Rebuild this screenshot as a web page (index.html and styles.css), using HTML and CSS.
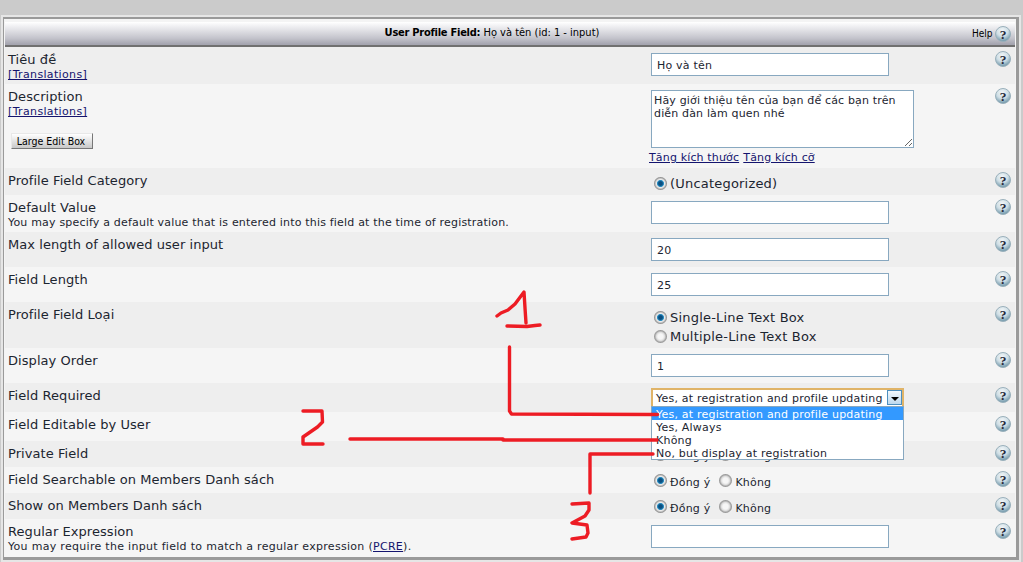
FILE: index.html
```html
<!DOCTYPE html>
<html lang="vi">
<head>
<meta charset="utf-8">
<title>User Profile Field</title>
<link rel="stylesheet" href="styles.css">
</head>
<body>
<svg width="0" height="0" class="defs">
  <defs>
    <radialGradient id="hg" cx="45%" cy="28%" r="76%">
      <stop offset="0" stop-color="#f2f6f8"/>
      <stop offset="0.5" stop-color="#cfdee5"/>
      <stop offset="1" stop-color="#5f8ba0"/>
    </radialGradient>
    <symbol id="help" viewBox="0 0 16 16">
      <circle cx="8" cy="8" r="7.500" fill="url(#hg)" stroke="#9ab0bb" stroke-width="1"/>
      <text x="8" y="12.500" text-anchor="middle" font-family="Liberation Serif, serif" font-weight="bold" font-size="13.500" fill="#262b3c">?</text>
    </symbol>
  </defs>
</svg>
<main class="frame">
  <div class="inner">
    <header class="head">
      <div class="head-title"><b class="head-b">User Profile Field:</b> Họ và tên (id: 1 - input)</div>
      <div class="head-help">Help <svg class="hicon"><use href="#help"/></svg></div>
    </header>

    <section class="row alt r1">
      <div class="label">Tiêu đề<a class="small tr" href="#">[Translations]</a></div>
      <div class="ctl"><input class="text" type="text" value="Họ và tên"></div>
      <div class="hc"><svg class="hicon"><use href="#help"/></svg></div>
    </section>

    <section class="row r2">
      <div class="label">Description<a class="small tr" href="#">[Translations]</a>
        <div class="btnwrap"><button class="btn" type="button">Large Edit Box</button></div>
      </div>
      <div class="ctl">
        <textarea class="area">Hãy giới thiệu tên của bạn để các bạn trên diễn đàn làm quen nhé</textarea>
        <div class="sizers"><a class="small" href="#">Tăng kích thước</a> <a class="small" href="#">Tăng kích cỡ</a></div>
      </div>
      <div class="hc"><svg class="hicon"><use href="#help"/></svg></div>
    </section>

    <section class="row alt r3">
      <div class="label">Profile Field Category</div>
      <div class="ctl ctl-radio"><div class="opt"><span class="radio on"></span>(Uncategorized)</div></div>
      <div class="hc"><svg class="hicon"><use href="#help"/></svg></div>
    </section>

    <section class="row r4">
      <div class="label">Default Value<div class="desc">You may specify a default value that is entered into this field at the time of registration.</div></div>
      <div class="ctl"><input class="text" type="text" value=""></div>
      <div class="hc"><svg class="hicon"><use href="#help"/></svg></div>
    </section>

    <section class="row alt r5">
      <div class="label">Max length of allowed user input</div>
      <div class="ctl"><input class="text" type="text" value="20"></div>
      <div class="hc"><svg class="hicon"><use href="#help"/></svg></div>
    </section>

    <section class="row r6">
      <div class="label">Field Length</div>
      <div class="ctl"><input class="text" type="text" value="25"></div>
      <div class="hc"><svg class="hicon"><use href="#help"/></svg></div>
    </section>

    <section class="row alt r7">
      <div class="label">Profile Field Loại</div>
      <div class="ctl ctl-radio">
        <div class="opt"><span class="radio on"></span>Single-Line Text Box</div>
        <div class="opt"><span class="radio"></span>Multiple-Line Text Box</div>
      </div>
      <div class="hc"><svg class="hicon"><use href="#help"/></svg></div>
    </section>

    <section class="row r8">
      <div class="label">Display Order</div>
      <div class="ctl"><input class="text" type="text" value="1"></div>
      <div class="hc"><svg class="hicon"><use href="#help"/></svg></div>
    </section>

    <section class="row alt r9">
      <div class="label">Field Required</div>
      <div class="ctl">
        <div class="select">
          <span class="select-val">Yes, at registration and profile updating</span>
          <span class="select-btn"><span class="arrow"></span></span>
          <ul class="menu">
            <li class="sel">Yes, at registration and profile updating</li>
            <li>Yes, Always</li>
            <li>Không</li>
            <li>No, but display at registration</li>
          </ul>
        </div>
      </div>
      <div class="hc"><svg class="hicon"><use href="#help"/></svg></div>
    </section>

    <section class="row r10">
      <div class="label">Field Editable by User</div>
      <div class="ctl"></div>
      <div class="hc"><svg class="hicon"><use href="#help"/></svg></div>
    </section>

    <section class="row alt r11">
      <div class="label">Private Field</div>
      <div class="ctl ctl-yn"><span class="radio on"></span><span class="yn">Đồng ý</span><span class="radio"></span><span class="yn">Không</span></div>
      <div class="hc"><svg class="hicon"><use href="#help"/></svg></div>
    </section>

    <section class="row r12">
      <div class="label">Field Searchable on Members Danh sách</div>
      <div class="ctl ctl-yn"><span class="radio on"></span><span class="yn">Đồng ý</span><span class="radio"></span><span class="yn">Không</span></div>
      <div class="hc"><svg class="hicon"><use href="#help"/></svg></div>
    </section>

    <section class="row alt r13">
      <div class="label">Show on Members Danh sách</div>
      <div class="ctl ctl-yn"><span class="radio on"></span><span class="yn">Đồng ý</span><span class="radio"></span><span class="yn">Không</span></div>
      <div class="hc"><svg class="hicon"><use href="#help"/></svg></div>
    </section>

    <section class="row r14">
      <div class="label">Regular Expression<div class="desc desc-wide">You may require the input field to match a regular expression (<a href="#">PCRE</a>).</div></div>
      <div class="ctl"><input class="text" type="text" value=""></div>
      <div class="hc"><svg class="hicon"><use href="#help"/></svg></div>
    </section>
  </div>
</main>
<svg class="ink" width="1023" height="562" viewBox="0 0 1023 562" fill="none" stroke="#ed1c24" stroke-width="3.4" stroke-linecap="round" stroke-linejoin="round">
  <path d="M497 316l4-3 7-3 7-6 9-12 1 16 1 15"/>
  <path d="M507 326l20 .5 8-1 5-.5"/>
  <path d="M509.500 347v64l2 3 146 .5"/>
  <path d="M303 411h19l.5 11-5 5-14.500 10v7h20"/>
  <path d="M350 439h153"/>
  <path d="M503 440h154"/>
  <path d="M653 454h-63v39"/>
  <path d="M572 504l17-1v7l-4 6-13 7 15 2 1 8-2 4-14 2"/>
</svg>
</body>
</html>
```
FILE: styles.css
```css
* { box-sizing: border-box; }
html, body { margin: 0; padding: 0; }
body {
  width: 1023px;
  height: 562px;
  overflow: hidden;
  background: #cbcbcb;
  padding: 15px 2px 0 1px;
  font-family: "DejaVu Sans", Verdana, sans-serif;
  font-size: 13px;
  color: #1c2530;
}
.defs { position: absolute; }
.frame {
  border: 2px solid #e6e6e6;
  background: #e6e6e6;
  height: 547px;
}
.inner {
  border: 2px solid #9a9a9a;
  border-width: 2px 3px 3px 1px;
  background: #f4f4f4;
  padding: 3px 1px 0 1px;
  height: 100%;
}
.head {
  height: 25px;
  display: flex;
  align-items: center;
  background: linear-gradient(#ffffff 0%, #e6e6ea 30%, #c4c4cc 70%, #a5a5b0 96%);
  border-bottom: 2px solid #707070;
  font-family: "DejaVu Sans Condensed", "Liberation Sans", sans-serif;
  font-size: 11px;
  color: #000;
}
.head-title { flex: 1; text-align: center; padding: 0 0 2px 7px; }
.head-b { letter-spacing: -.25px; }
.head-help { width: 39px; flex: none; display: flex; align-items: center; gap: 2px; font-size: 10px; margin-right: 4px; }
.hicon { width: 16px; height: 16px; display: block; }
.row {
  display: grid;
  grid-template-columns: 646px 344px 1fr;
  background: #f5f5f5;
}
.alt { background: #eeeeee; }
.r1 { height: 37px; }
.r2 { height: 84px; }
.r3 { height: 27px; }
.r4 { height: 37px; }
.r5 { height: 35px; }
.r6 { height: 35px; }
.r7 { height: 46px; }
.r8 { height: 35px; }
.r9 { height: 29px; }
.r10 { height: 29px; }
.r11 { height: 26px; }
.r12 { height: 26px; }
.r13 { height: 26px; }
.r14 { height: 38px; }
.label { padding: 5px 0 0 3px; line-height: 16px; letter-spacing: .06px; }
.small { font-size: 11px; line-height: 13px; letter-spacing: .15px; }
.tr { display: block; letter-spacing: .35px; }
a { color: #14146e; }
.desc { font-size: 11px; line-height: 13px; letter-spacing: .19px; }
.desc-wide { letter-spacing: .3px; }
.btnwrap { padding-top: 15px; padding-left: 3px; }
.btn {
  display: block;
  width: 82px;
  height: 16px;
  padding: 0 2px 0 0;
  border: 1px solid;
  border-color: #e8e8e8 #777 #777 #e8e8e8;
  background: linear-gradient(#ffffff, #c8c8c8);
  font-family: "DejaVu Sans Condensed", "Liberation Sans", sans-serif;
  font-size: 10.500px;
  color: #000;
}
.ctl { padding-top: 6px; position: relative; }
.text {
  display: block;
  width: 238px;
  height: 23px;
  border: 1px solid #88a8c0;
  background: #fff;
  padding: 2px 5px 0;
  font-family: "DejaVu Sans", sans-serif;
  font-size: 11px;
  letter-spacing: .2px;
  color: #1c2530;
  outline: none;
}
.area {
  display: block;
  width: 263px;
  height: 58px;
  border: 1px solid #88a8c0;
  background: #fff;
  padding: 3px 2px 2px;
  font-family: "DejaVu Sans", sans-serif;
  font-size: 11px;
  line-height: 13px;
  letter-spacing: .16px;
  color: #1c2530;
  outline: none;
  margin: 0;
}
.sizers { margin-left: -2px; line-height: 13px; padding-top: 2px; }
.ctl-radio { padding-top: 6px; padding-left: 3px; letter-spacing: .2px; }
.opt { display: flex; align-items: center; height: 19px; white-space: nowrap; }
.radio {
  flex: none;
  width: 13px;
  height: 13px;
  border-radius: 50%;
  margin-right: 3px;
  background: radial-gradient(circle closest-side at 50% 50%, #f6f6f6 0 40%, #dddddd 65%, #b0b0b0 82%, #8a8a8a 100%);
  display: inline-block;
}
.radio.on { background: radial-gradient(circle closest-side at 50% 50%, #0b4f80 0 28%, #2a8fc4 48%, #f0f0f0 60%, #d8d8d8 72%, #a8a8a8 86%, #7c7c7c 100%); }
.ctl-yn { display: flex; align-items: center; padding: 4px 0 0 3px; font-size: 11px; letter-spacing: .2px; height: 22px; }
.yn { margin-right: 9px; padding-top: 5px; }
.select {
  width: 253px;
  height: 18px;
  margin-top: -1px;
  border: 2px solid #e0b468;
  border-bottom: 0;
  background: #fff;
  display: flex;
  align-items: center;
  position: relative;
  font-size: 11px;
  letter-spacing: .22px;
  padding: 0 0 0 3px;
  justify-content: space-between;
  white-space: nowrap;
}
.select-btn {
  align-self: flex-start;
  width: 15px;
  height: 15px;
  border: 1px solid #4d8fbf;
  background: linear-gradient(#f2f8fd, #bcd8ee);
  display: flex;
  align-items: center;
  justify-content: center;
}
.arrow { width: 0; height: 0; margin-top: 3px; border: 4px solid transparent; border-top: 4px solid #000; border-bottom: 0; }
.menu {
  position: absolute;
  left: -2px;
  top: 16px;
  width: 253px;
  margin: 0;
  padding: 0;
  list-style: none;
  background: #fff;
  border: 1px solid #88a8c0;
  z-index: 2;
}
.menu li { height: 13px; line-height: 13px; padding: 1px 0 0 4px; }
.menu .sel { background: #3399ff; color: #fff; }
.hc { padding-top: 4px; }
.ink { position: absolute; left: 0; top: 0; z-index: 5; pointer-events: none; }
```
